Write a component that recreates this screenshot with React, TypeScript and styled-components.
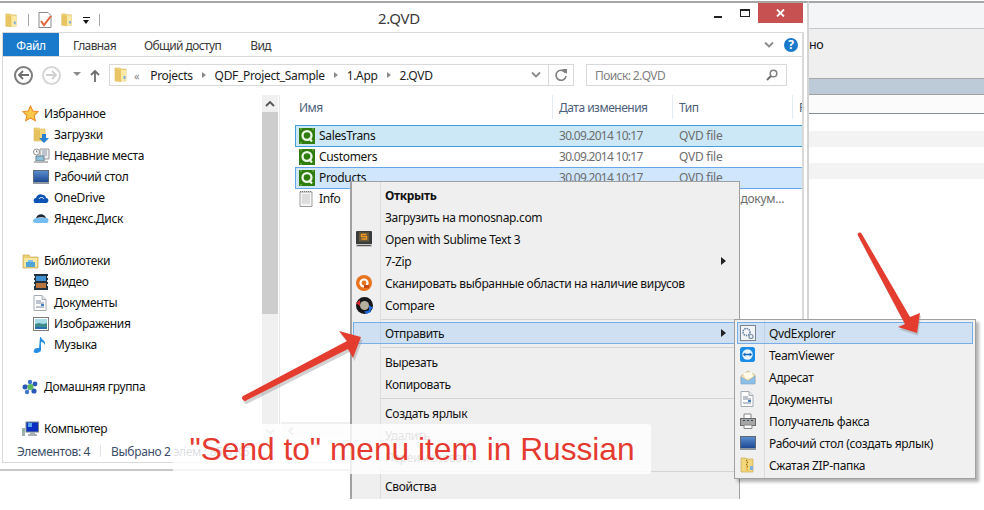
import React from "react";
import styled, { createGlobalStyle } from "styled-components";

const Global = createGlobalStyle`
  html, body { margin: 0; padding: 0; background: #fff; }
  * { box-sizing: border-box; }
  body { font-family: "Noto Sans", "Open Sans", sans-serif; font-size: 12px; }
`;

const Page = styled.div`
  position: relative; width: 984px; height: 510px; overflow: hidden; background: #fff;
  display: flex; align-items: flex-start;
  letter-spacing: -0.33px;
`;

/* ---------- icons ---------- */
const S = styled.svg`display: block; flex: none;`;
type P = { s?: number };
const Folder = ({ s = 16 }: P) => (
  <S width={s} height={s} viewBox="0 0 16 16">
    <path d="M2 1h5l1 1h5v12H2z" fill="#f2d77e" stroke="#d6b65c" strokeWidth=".6" />
    <path d="M2 2l6 1v12l-6-1z" fill="#e8c463" />
    <path d="M8 3h5v11H8z" fill="#fbeaa6" />
    <path d="M10.5 9h2v3h-2z" fill="#79aee0" />
  </S>
);
const DownFolder = () => (
  <S width={16} height={16} viewBox="0 0 16 16">
    <path d="M1 1h5l1 1h5v12H1z" fill="#f2d77e" stroke="#d6b65c" strokeWidth=".6" />
    <path d="M1 2l6 1v11l-6-1z" fill="#e6c25f" />
    <path d="M9 7h4v4h3l-5 5-5-5h3z" fill="#2a7fd0" />
  </S>
);
const Star = () => (
  <S width={17} height={17} viewBox="0 0 17 17">
    <path d="M8.5 1l2.3 5 5.4.6-4 3.7 1.1 5.4-4.8-2.7-4.8 2.7 1.1-5.4-4-3.7 5.4-.6z" fill="#fbc94a" stroke="#ec8e2c" strokeWidth="1.1" />
  </S>
);
const Recent = () => (
  <S width={17} height={16} viewBox="0 0 17 16">
    <circle cx="3.5" cy="4" r="3" fill="#fff" stroke="#8d8d8d" />
    <path d="M3.5 2.5V4H5" stroke="#666" fill="none" strokeWidth=".7" />
    <path d="M7 1h9v10H7z" fill="#eee" stroke="#9a9a9a" />
    <path d="M9 3h5M9 5h5M9 7h5" stroke="#8c9bb0" />
    <path d="M3 8h8v5H3z" fill="#8cc4e0" stroke="#6e7f8a" />
    <path d="M1 13h14v2H1z" fill="#b8b8b8" />
  </S>
);
const Desktop = () => (
  <S width={16} height={14} viewBox="0 0 16 14">
    <defs>
      <linearGradient id="dk" x1="0" y1="0" x2="0" y2="1">
        <stop offset="0" stopColor="#5c8fd0" />
        <stop offset="1" stopColor="#1b4691" />
      </linearGradient>
    </defs>
    <rect x=".5" y=".5" width="15" height="12" fill="url(#dk)" stroke="#5c6a78" />
    <path d="M0 12h16v2H0z" fill="#8f979e" />
  </S>
);
const OneDrive = () => (
  <S width={16} height={12} viewBox="0 0 16 12">
    <path d="M1 10c-1-2 0-4 2-4 1-3 4-5 7-3 2 0 3 2 3 3 2 0 3 2 2 4-1 1-2 1-2 1H3c-1 0-2 0-2-1z" fill="#0d52b5" />
    <path d="M6 7c1-2 4-2 5 0" stroke="#fff" fill="none" />
  </S>
);
const Yandex = () => (
  <S width={16} height={13} viewBox="0 0 16 13">
    <path d="M0 9c0-2 2-3 4-3h10c2 1 2 4 0 5H2C1 11 0 10 0 9z" fill="#75bdf0" />
    <path d="M3 6c1-4 8-6 10 0-3-1-6-1-10 0z" fill="#1f2a38" />
  </S>
);
const Library = () => (
  <S width={17} height={16} viewBox="0 0 17 16">
    <path d="M1 2h6l1 2h8v11H1z" fill="#f0cf73" stroke="#c9a957" strokeWidth=".7" />
    <path d="M2 5h13v9H2z" fill="#fbe8a6" />
    <path d="M4 9h9v5H4z" fill="#4fa4d6" />
    <path d="M6 7h5v2H6z" fill="#82c4e8" />
  </S>
);
const Video = () => (
  <S width={16} height={16} viewBox="0 0 16 16">
    <rect x="1" y="0" width="14" height="16" fill="#20303c" />
    <path d="M3 2h10v5H3z" fill="#3f8fd0" />
    <path d="M3 9h10v5H3z" fill="#b8763e" />
    <path d="M1 2h1v2H1zM1 6h1v2H1zM1 10h1v2H1zM14 2h1v2h-1zM14 6h1v2h-1zM14 10h1v2h-1z" fill="#e8e8e8" />
  </S>
);
const Doc = () => (
  <S width={14} height={16} viewBox="0 0 14 16">
    <path d="M1 .5h8l4 4v11H1z" fill="#fdfdfd" stroke="#a4aab2" />
    <path d="M9 .5v4h4" fill="#e2e8ee" stroke="#a4aab2" />
    <path d="M3 6h5M3 8h8M3 12h8" stroke="#7e8aa0" />
    <path d="M8 9h3v2H8z" fill="#3f7fc4" />
  </S>
);
const Pictures = () => (
  <S width={16} height={14} viewBox="0 0 16 14">
    <rect x=".5" y=".5" width="15" height="13" fill="#fff" stroke="#7c7c7c" />
    <path d="M2 2h12v5H2z" fill="#a8dcea" />
    <path d="M2 7l4-1 4 1 4-1v6H2z" fill="#3f8c8c" />
    <path d="M2 10h12v2H2z" fill="#2a6fb0" />
  </S>
);
const Music = () => (
  <S width={14} height={16} viewBox="0 0 14 16">
    <path d="M7 0h1c0 3 5 3 4 8-1-2-2-3-4-3v8c0 2-3 3-5 3-2 0-3-2-2-3 1-2 3-2 5-2z" fill="#2a8ee0" />
  </S>
);
const Home = () => (
  <S width={17} height={16} viewBox="0 0 17 16">
    <path d="M8 8L3 6M8 8l5-4M8 8l5 4M8 8l-3 5" stroke="#7d9fc8" strokeWidth="1.4" />
    <circle cx="3" cy="8" r="2.5" fill="#2c58b8" />
    <circle cx="8" cy="3" r="2.2" fill="#3e72d0" />
    <circle cx="13" cy="5" r="2.4" fill="#2c58b8" />
    <circle cx="12" cy="12" r="2.6" fill="#2c58b8" />
    <circle cx="5" cy="13" r="2.2" fill="#4078c8" />
    <circle cx="8.5" cy="8" r="3" fill="#5cb85a" />
  </S>
);
const Computer = () => (
  <S width={17} height={16} viewBox="0 0 17 16">
    <path d="M0 7h3v8H0z" fill="#9fb0b0" />
    <path d="M1 9h1v1H1z" fill="#53c04c" />
    <rect x="4" y="1" width="12.5" height="10" fill="#0a2fc0" stroke="#7a8790" />
    <path d="M6 2h4v4H6z" fill="#56a6ef" />
    <path d="M8 11h5v2h2v2H6v-2h2z" fill="#a8b0b4" />
  </S>
);
const Qvd = () => (
  <S width={16} height={16} viewBox="0 0 16 16">
    <rect width="16" height="16" fill="#2f7d0f" />
    <circle cx="8" cy="7.5" r="5.600" fill="#eef7e8" />
    <circle cx="8" cy="7.5" r="3.300" fill="#2f7d0f" />
    <path d="M10 10l3 3.500" stroke="#eef7e8" strokeWidth="2" />
    <path d="M1 1h2M13 1h2M1 15h2" stroke="#8abc66" />
  </S>
);
const NoteFile = () => (
  <S width={14} height={16} viewBox="0 0 14 16">
    <path d="M1 1h12v14.500H1z" fill="#f6f6f6" stroke="#9d9d9d" />
    <path d="M1 .5h12" stroke="#777" strokeDasharray="1 1" />
    <path d="M3 4h8M3 6h8M3 8h8M3 10h8M3 12h8" stroke="#c4c4c4" />
  </S>
);
const Sublime = () => (
  <S width={16} height={16} viewBox="0 0 16 16">
    <rect x="0" y="0" width="16" height="14" rx="1" fill="#3c3c3c" />
    <rect x="3" y="1.500" width="10" height="9" fill="#6a5a3c" />
    <path d="M10.500 3.500h-5v2.200h5v2.300h-5" stroke="#f29a1f" fill="none" strokeWidth="1.300" />
    <path d="M0 13h16v3H0z" fill="#c8c8c8" />
    <path d="M1 14.500h14" stroke="#555" />
  </S>
);
const Avast = () => (
  <S width={16} height={16} viewBox="0 0 16 16">
    <circle cx="8" cy="8" r="8" fill="#e8731e" />
    <circle cx="8" cy="8" r="4.600" fill="#fff" />
    <circle cx="8" cy="8" r="2.400" fill="#e8731e" />
    <path d="M8 10h5v3H8z" fill="#c74a10" />
  </S>
);
const Compare = () => (
  <S width={17} height={17} viewBox="0 0 17 17">
    <circle cx="8.500" cy="8.500" r="8.500" fill="#15151a" />
    <circle cx="8.500" cy="8.500" r="4.500" fill="#b4ae9e" />
    <path d="M0 6l4-3v6z" fill="#d8262c" />
    <path d="M17 11l-4 3V8z" fill="#1f6be0" />
    <path d="M8 14a6 6 0 0 0 6-2l1 3-5 2z" fill="#1f6be0" />
  </S>
);
const QvdApp = () => (
  <S width={16} height={16} viewBox="0 0 16 16">
    <rect x=".5" y=".5" width="15" height="15" fill="#f2f4f6" stroke="#7a8490" />
    <circle cx="6.500" cy="7" r="3.500" fill="none" stroke="#5f7c9c" strokeWidth="1.500" strokeDasharray="1.500 .8" />
    <circle cx="11" cy="11.500" r="2" fill="none" stroke="#7b8fa6" strokeWidth="1.200" />
  </S>
);
const TeamViewer = () => (
  <S width={16} height={16} viewBox="0 0 16 16">
    <rect width="15" height="15" rx="2.500" fill="#1a8ce6" />
    <circle cx="7.500" cy="7.500" r="5.200" fill="#e9f4fd" />
    <path d="M2.800 7.500l2.500-2v1.200h4.400V5.500l2.500 2-2.500 2V8.300H5.300v1.200z" fill="#1268c0" />
  </S>
);
const Mail = () => (
  <S width={16} height={15} viewBox="0 0 16 15">
    <path d="M1 6L8 1l7 4v8H1z" fill="#f7e3b6" stroke="#b9a27a" strokeWidth=".6" />
    <path d="M3 3l9-1 1 5-7 2z" fill="#fffbe8" />
    <path d="M1 7l7 4 7-5v8H1z" fill="#8cc0e8" stroke="#7aa2c4" strokeWidth=".6" />
  </S>
);
const Fax = () => (
  <S width={16} height={16} viewBox="0 0 16 16">
    <path d="M4 1h7v5H4z" fill="#fafafa" stroke="#888" />
    <rect x=".5" y="5.500" width="15" height="7" fill="#a6a6a6" stroke="#6b6b6b" />
    <path d="M3 7h2v1H3zM7 7h2v1H7zM11 7h2v1h-2z" fill="#304860" />
    <path d="M4 12h8v3.500H4z" fill="#fafafa" stroke="#888" />
  </S>
);
const Zip = () => (
  <S width={15} height={16} viewBox="0 0 15 16">
    <path d="M1 1h5l1 1h6v13H1z" fill="#f2d77e" stroke="#c9a957" strokeWidth=".7" />
    <path d="M6 2h2v12H6z" fill="#e8bf50" />
    <path d="M6 3h1v1H6zM7 5h1v1H7zM6 7h1v1H6zM7 9h1v1H7z" fill="#7a6a32" />
    <path d="M10 9h3v4h-3z" fill="#7fb0dc" />
  </S>
);

/* ---------- explorer window ---------- */
const Window = styled.div`
  flex: none; width: 809px; height: 470px; margin-top: 1px;
  border-top: 2px solid #a6a6a6; border-right: 2px solid #d4d4d4; border-bottom: 2px solid #c8c8c8;
  background: #fff; display: flex; flex-direction: column; padding: 0 5px 6px 2px;
`;
const TitleBar = styled.div`
  height: 29px; flex: none; display: flex; align-items: flex-start; position: relative;
`;
const Quick = styled.div`
  display: flex; align-items: center; height: 22px; margin-top: 6px; padding-left: 2px; width: 370px; flex: none;
`;
const QuickSep = styled.i<{ $r: number }>`display: block; width: 1px; height: 12px; background: #a6a6a6; margin: 0 ${p => p.$r}px 0 9px;`;
const QuickGap = styled.span`display: block; width: 7px; flex: none;`;
const DropGlyph = styled.span`
  display: block; width: 7px; height: 7px; margin: 0 0 0 9px;
  border-top: 1px solid #111; position: relative;
  &::after { content: ""; position: absolute; left: 0; top: 2px; border: 3.500px solid transparent; border-top: 4px solid #111; border-bottom: 0; }
`;
const Title = styled.div`
  font-size: 15px; color: #3a3a3a; margin: 5px 0 0 6px; letter-spacing: -0.3px; line-height: 20px;
`;
const Controls = styled.div`margin-left: auto; display: flex; align-items: flex-start; height: 20px; margin-right: -1px;`;
const Min = styled.i`display: block; width: 8px; height: 2px; background: #222; margin: 13px 18px 0 0;`;
const Max = styled.i`display: block; width: 10px; height: 8px; border: 1px solid #222; border-top-width: 2px; margin: 6px 8px 0 0;`;
const Close = styled.div`
  width: 45px; height: 20px; background: #c75050; display: flex; align-items: center; justify-content: center;
`;
const Frame = styled.div`
  flex: 1; min-height: 0; display: flex; flex-direction: column;
  border: 1px solid #d9d9d9; border-width: 1px 2px 1px 1px; width: 802px;
`;
const Tabs = styled.div`
  height: 24px; flex: none; display: flex; align-items: stretch; border-bottom: 1px solid #dadada; padding-right: 4px;
`;
const FileTab = styled.div`
  width: 56px; height: 23px; background: #1979ca; color: #fff; display: flex; align-items: center; justify-content: center; margin-right: 14px; padding-top: 1px;
`;
const Tab = styled.div<{ $r: number }>`
  color: #3b3b3b; display: flex; align-items: center; margin-right: ${p => p.$r}px; padding-top: 2px; letter-spacing: -0.6px;
`;
const RibbonRight = styled.div`margin-left: auto; display: flex; align-items: center; gap: 10px;`;
const Help = styled.div`
  width: 14px; height: 14px; border-radius: 50%; background: #1979ca; color: #fff; font-weight: 700; font-size: 12px;
  display: flex; align-items: center; justify-content: center; letter-spacing: 0;
`;
const AddressRow = styled.div`
  height: 38px; flex: none; display: flex; align-items: center; padding: 0 13px 2px 11px;
`;
const NavCircle = styled.div<{ $on?: boolean }>`
  width: 19px; height: 19px; border-radius: 50%; border: ${p => (p.$on ? "2px solid #7d7d7d" : "2px solid #d6d6d6")};
  display: flex; align-items: center; justify-content: center; margin-right: 9px; flex: none;
`;
const RecentDrop = styled.svg`margin: 0 9px 2px 3px; flex: none;`;
const UpArrow = styled.svg`flex: none;`;
const AddressBox = styled.div`
  width: 465px; height: 22px; border: 1px solid #d9d9d9; display: flex; align-items: center; padding-left: 3px; flex: none; margin-left: 9px;
`;
const Crumb = styled.span`color: #1c1c1c; white-space: nowrap;`;
const CrumbArrow = styled.i`
  display: block; margin: 0 9px; border: 3.500px solid transparent; border-left: 4px solid #8a8a8a; border-right: 0; flex: none;
`;
const Back = styled.span`color: #888; margin: 0 11px 0 5px; font-size: 11px;`;
const AddressEnd = styled.div`
  margin-left: auto; display: flex; align-items: center; height: 100%;
`;
const Refresh = styled.div`
  width: 25px; height: 100%; border-left: 1px solid #d9d9d9; margin-left: 7px; display: flex; align-items: center; justify-content: center;
`;
const SearchBox = styled.div`
  width: 201px; height: 22px; margin-left: 12px; border: 1px solid #d9d9d9; display: flex; align-items: center; justify-content: space-between;
  padding: 0 8px 0 8px; color: #7f7f7f; flex: none; letter-spacing: -0.6px;
`;
const Body = styled.div`flex: 1; min-height: 0; display: flex;`;
const Nav = styled.div`width: 259px; flex: none; padding-top: 8px; overflow: hidden;`;
const NavRow = styled.div<{ $child?: boolean; $gap?: number }>`
  height: 21px; display: flex; align-items: center; color: #101010; white-space: nowrap;
  padding-left: ${p => (p.$child ? 30 : 19)}px;
  margin-top: ${p => p.$gap ?? 0}px;
`;
const NavIcon = styled.span<{ $child?: boolean }>`
  width: ${p => (p.$child ? 21 : 22)}px; flex: none; display: flex; align-items: center;
`;
const VBar = styled.div`
  width: 16px; flex: none; background: #f0f0f0; display: flex; flex-direction: column; position: relative;
`;
const VUp = styled.div`height: 17px; display: flex; align-items: center; justify-content: center; flex: none;`;
const VThumb = styled.div`height: 202px; background: #cdcdcd; flex: none;`;
const VDown = styled.div`margin-top: auto; height: 17px; display: flex; align-items: center; justify-content: center; flex: none;`;
const ListPane = styled.div`
  flex: 1; min-width: 0; margin-left: 1px; border-left: 1px solid #e8e8e8; display: flex; flex-direction: column; overflow: hidden; position: relative;
`;
const Head = styled.div`
  height: 26px; flex: none; display: flex; align-items: center; color: #4c607a; white-space: nowrap; padding: 0 0 2px 19px; letter-spacing: -0.5px;
`;
const HeadCell = styled.div<{ $w: number }>`
  width: ${p => p.$w}px; flex: none; height: 24px; display: flex; align-items: center; padding-left: 6px;
  border-left: 1px solid #e4ecf4;
  &:first-child { border-left: 0; padding-left: 0; }
`;
const Rows = styled.div`padding: 4px 0 0 15px; width: 540px;`;
const Row = styled.div<{ $sel?: "a" | "b" }>`
  height: 22px; margin-top: -1px; display: flex; align-items: center; white-space: nowrap;
  padding: 0 0 1px 3px; color: #111;
  background: ${p => (p.$sel === "a" ? "#cce8f7" : p.$sel === "b" ? "#d0e6fc" : "transparent")};
  border: 1px solid ${p => (p.$sel === "a" ? "#3ea0d6" : p.$sel === "b" ? "#66a7e8" : "transparent")};
  border-right: 0;
  &:first-child { margin-top: 0; }
`;
const RowName = styled.span`width: 260px; flex: none; display: flex; align-items: center; gap: 4px;`;
const RowDate = styled.span`width: 120px; flex: none; color: #6d6d6d; letter-spacing: -0.72px;`;
const RowType = styled.span`color: #6d6d6d; letter-spacing: -0.25px;`;
const InfoLabel = styled.span`margin-left: 2px;`;
const HBar = styled.div`
  position: absolute; left: 1px; right: 0; bottom: 1px; height: 17px; background: #f0f0f0; display: flex; align-items: center; padding-left: 6px;
`;
const Status = styled.div`
  height: 22px; flex: none; display: flex; align-items: center; padding-left: 14px; color: #3b4d68; white-space: nowrap;
`;
const StatusSep = styled.i`display: block; width: 1px; height: 12px; background: #e4e4e4; margin: 0 10px;`;

/* ---------- background window ---------- */
const Behind = styled.div`flex: 1; height: 181px; margin-top: 1px; display: flex; flex-direction: column; border-top: 2px solid #a6a6a6;`;
const Band = styled.div<{ $h: number; $bg: string; $line?: string }>`
  height: ${p => p.$h}px; flex: none; background: ${p => p.$bg}; border-bottom: ${p => (p.$line ? `1.500px solid ${p.$line}` : "0")};
  display: flex; align-items: flex-start;
`;
const BehindText = styled.span`color: #111; margin-top: 7px; font-size: 12.500px;`;

/* ---------- menus ---------- */
const Menu = styled.div`
  position: absolute; left: 350px; top: 181px; width: 390px; height: 318px;
  border: 1px solid #a0a0a0; border-left-width: 2px; border-bottom: 0; padding-top: 2px;
  background: linear-gradient(#dcdcdc, #dcdcdc) 28px 0 / 1px 100% no-repeat, #efefef;
  color: #111;
`;
const Sub = styled.div`
  position: absolute; left: 734px; top: 319px; width: 242px; height: 160px;
  border: 1px solid #a0a0a0; padding-top: 2px;
  background: linear-gradient(#dcdcdc, #dcdcdc) 29px 0 / 1px 100% no-repeat, #f0f0f0;
  box-shadow: 3px 3px 3px rgba(0,0,0,.3);
  color: #111;
`;
const Item = styled.div<{ $on?: boolean; $off?: boolean; $sub?: boolean }>`
  height: 22px; display: flex; align-items: center; white-space: nowrap; position: relative;
  margin: 0 ${p => (p.$sub ? 2 : 3)}px 0 ${p => (p.$sub ? 2 : 1)}px;
  padding-right: 9px;
  border: 1px solid ${p => (p.$on ? "#78aee5" : "transparent")};
  background: ${p => (p.$on ? "rgba(140,195,245,.33)" : "transparent")};
  color: ${p => (p.$off ? "#666" : "inherit")};
`;
const ItemIcon = styled.span`
  width: 31px; flex: none; display: flex; justify-content: flex-start; padding-left: 2px;
`;
const Bold = styled.b`font-weight: 700;`;
const MoreArrow = styled.i`
  display: block; margin-left: auto; border: 4px solid transparent; border-left: 5px solid #222; border-right: 0;
`;
const Separator = styled.div<{ $h: number; $l: number }>`
  height: ${p => p.$h}px; display: flex; align-items: center; padding-left: ${p => p.$l}px;
  &::before { content: ""; display: block; width: 100%; height: 1px; background: #d4d4d4; }
`;

/* ---------- annotation ---------- */
const Note = styled.div`
  position: absolute; left: 173px; top: 424px; width: 478px; height: 50px; border-radius: 3px;
  background: rgba(255,255,255,.82); color: #e53a30;
  font-family: "Liberation Sans", Arial, sans-serif; font-size: 31.700px; letter-spacing: 0;
  display: flex; align-items: center; justify-content: center; white-space: nowrap;
`;
const Arrows = styled.svg`position: absolute; left: 0; top: 0; pointer-events: none;`;

const Chev = ({ d, c = "#8a8a8a" }: { d: string; c?: string }) => (
  <svg width="10" height="8" viewBox="0 0 10 8"><path d={d} fill="none" stroke={c} strokeWidth="1.800" /></svg>
);

const favs = [
  { n: "Загрузки", i: <DownFolder /> },
  { n: "Недавние места", i: <Recent /> },
  { n: "Рабочий стол", i: <Desktop /> },
  { n: "OneDrive", i: <OneDrive /> },
  { n: "Яндекс.Диск", i: <Yandex /> },
];
const libs = [
  { n: "Видео", i: <Video /> },
  { n: "Документы", i: <Doc /> },
  { n: "Изображения", i: <Pictures /> },
  { n: "Музыка", i: <Music /> },
];
const files: { n: string; sel?: "a" | "b" }[] = [
  { n: "SalesTrans", sel: "a" },
  { n: "Customers" },
  { n: "Products", sel: "b" },
];
const subs = [
  { n: "QvdExplorer", i: <QvdApp />, on: true },
  { n: "TeamViewer", i: <TeamViewer /> },
  { n: "Адресат", i: <Mail /> },
  { n: "Документы", i: <Doc /> },
  { n: "Получатель факса", i: <Fax /> },
  { n: "Рабочий стол (создать ярлык)", i: <Desktop /> },
  { n: "Сжатая ZIP-папка", i: <Zip /> },
];

const arrowA = "M243 396L347 341l-8-10 22 6-8 21-5-9L247 400a2.500 2.500 0 0 1-4-4z";
const arrowB = "M858 235.500a2 2 0 0 1 3.500-2L910 317l10-4-3 20-19-6 7-3z";

export default function App() {
  return (
    <Page>
      <Global />
      <Window>
        <TitleBar>
          <Quick>
            <Folder s={15} />
            <QuickSep $r={9} />
            <svg width="15" height="16" viewBox="0 0 15 16">
              <path d="M1 .5h9l3 3v12H1z" fill="#fff" stroke="#8a8a8a" />
              <path d="M3 9l3 4 7-9" fill="none" stroke="#e0653a" strokeWidth="2" />
            </svg>
            <QuickGap />
            <Folder s={14} />
            <DropGlyph />
            <QuickSep $r={0} />
          </Quick>
          <Title>2.QVD</Title>
          <Controls>
            <Min />
            <Max />
            <Close>
              <svg width="9" height="8" viewBox="0 0 9 8"><path d="M1 .5l7 7M8 .5l-7 7" stroke="#fff" strokeWidth="1.800" /></svg>
            </Close>
          </Controls>
        </TitleBar>
        <Frame>
          <Tabs>
            <FileTab>Файл</FileTab>
            <Tab $r={28}>Главная</Tab>
            <Tab $r={29}>Общий доступ</Tab>
            <Tab $r={0}>Вид</Tab>
            <RibbonRight>
              <Chev d="M1 1.500l4 4 4-4" />
              <Help>?</Help>
            </RibbonRight>
          </Tabs>
          <AddressRow>
            <NavCircle $on>
              <svg width="11" height="10" viewBox="0 0 11 10"><path d="M5 1L1 5l4 4M1 5h10" fill="none" stroke="#6e6e6e" strokeWidth="1.800" /></svg>
            </NavCircle>
            <NavCircle>
              <svg width="11" height="10" viewBox="0 0 11 10"><path d="M6 1l4 4-4 4M10 5H0" fill="none" stroke="#cfcfcf" strokeWidth="1.800" /></svg>
            </NavCircle>
            <RecentDrop width="8" height="5" viewBox="0 0 8 5"><path d="M0 0h8L4 4z" fill="#8a8a8a" /></RecentDrop>
            <UpArrow width="10" height="13" viewBox="0 0 10 13"><path d="M5 13V2M1 6l4-4 4 4" fill="none" stroke="#6e6e6e" strokeWidth="1.800" /></UpArrow>
            <AddressBox>
              <Folder s={16} />
              <Back>«</Back>
              <Crumb>Projects</Crumb>
              <CrumbArrow />
              <Crumb>QDF_Project_Sample</Crumb>
              <CrumbArrow />
              <Crumb>1.App</Crumb>
              <CrumbArrow />
              <Crumb>2.QVD</Crumb>
              <AddressEnd>
                <Chev d="M1 1.500l4 4 4-4" />
                <Refresh>
                  <svg width="13" height="13" viewBox="0 0 13 13"><path d="M10.500 4a5 5 0 1 0 .5 3" fill="none" stroke="#7f7f7f" strokeWidth="1.600" /><path d="M7 0l5 0 0 5z" fill="#7f7f7f" /></svg>
                </Refresh>
              </AddressEnd>
            </AddressBox>
            <SearchBox>
              Поиск: 2.QVD
              <svg width="12" height="12" viewBox="0 0 12 12"><circle cx="7.500" cy="4.500" r="3.300" fill="none" stroke="#7f7f7f" strokeWidth="1.500" /><path d="M5 7l-4 4" stroke="#6e6e6e" strokeWidth="2" /></svg>
            </SearchBox>
          </AddressRow>
          <Body>
            <Nav>
              <NavRow><NavIcon><Star /></NavIcon>Избранное</NavRow>
              {favs.map(f => (
                <NavRow key={f.n} $child><NavIcon $child>{f.i}</NavIcon>{f.n}</NavRow>
              ))}
              <NavRow $gap={21}><NavIcon><Library /></NavIcon>Библиотеки</NavRow>
              {libs.map(f => (
                <NavRow key={f.n} $child><NavIcon $child>{f.i}</NavIcon>{f.n}</NavRow>
              ))}
              <NavRow $gap={21}><NavIcon><Home /></NavIcon>Домашняя группа</NavRow>
              <NavRow $gap={21}><NavIcon><Computer /></NavIcon>Компьютер</NavRow>
            </Nav>
            <VBar>
              <VUp><Chev d="M1 6l4-4 4 4" c="#555" /></VUp>
              <VThumb />
              <VDown><Chev d="M1 1.500l4 4 4-4" c="#aaa" /></VDown>
            </VBar>
            <ListPane>
              <Head>
                <HeadCell $w={253}>Имя</HeadCell>
                <HeadCell $w={120}>Дата изменения</HeadCell>
                <HeadCell $w={120}>Тип</HeadCell>
                <HeadCell $w={60}>Размер</HeadCell>
              </Head>
              <Rows>
                {files.map(f => (
                  <Row key={f.n} $sel={f.sel}>
                    <RowName><Qvd />{f.n}</RowName>
                    <RowDate>30.09.2014 10:17</RowDate>
                    <RowType>QVD file</RowType>
                  </Row>
                ))}
                <Row>
                  <RowName><NoteFile /><InfoLabel>Info</InfoLabel></RowName>
                  <RowDate>30.09.2014 10:17</RowDate>
                  <RowType>Текстовый докум...</RowType>
                </Row>
              </Rows>
              <HBar><Chev d="M6 .5L2 4l4 3.500" c="#aaa" /></HBar>
            </ListPane>
          </Body>
          <Status>
            Элементов: 4
            <StatusSep />
            Выбрано 2 элем.: 85,5 КБ
          </Status>
        </Frame>
      </Window>

      <Behind>
        <Band $h={26} $bg="#f4f5f7" $line="#c8c8c8" />
        <Band $h={50} $bg="#efefef" $line="#a8a8a8"><BehindText>но</BehindText></Band>
        <Band $h={16} $bg="#bdcad7" $line="#a0a0a0" />
        <Band $h={19} $bg="#fbfbfb" $line="#858b99" />
        <Band $h={17} $bg="#fff" />
        <Band $h={16} $bg="#f3f3f3" />
        <Band $h={16} $bg="#fff" />
        <Band $h={16} $bg="#f3f3f3" />
      </Behind>

      <Menu>
        <Item><ItemIcon /><Bold>Открыть</Bold></Item>
        <Item><ItemIcon />Загрузить на monosnap.com</Item>
        <Item><ItemIcon><Sublime /></ItemIcon>Open with Sublime Text 3</Item>
        <Item><ItemIcon />7-Zip<MoreArrow /></Item>
        <Item><ItemIcon><Avast /></ItemIcon>Сканировать выбранные области на наличие вирусов</Item>
        <Item><ItemIcon><Compare /></ItemIcon>Compare</Item>
        <Separator $h={6} $l={28} />
        <Item $on><ItemIcon />Отправить<MoreArrow /></Item>
        <Separator $h={7} $l={28} />
        <Item><ItemIcon />Вырезать</Item>
        <Item><ItemIcon />Копировать</Item>
        <Separator $h={7} $l={28} />
        <Item><ItemIcon />Создать ярлык</Item>
        <Item $off><ItemIcon />Удалить</Item>
        <Item $off><ItemIcon />Переименовать</Item>
        <Separator $h={7} $l={28} />
        <Item><ItemIcon />Свойства</Item>
      </Menu>

      <Sub>
        {subs.map(s => (
          <Item key={s.n} $sub $on={s.on}><ItemIcon>{s.i}</ItemIcon>{s.n}</Item>
        ))}
      </Sub>

      <Note>"Send to" menu item in Russian</Note>

      <Arrows width="984" height="510" viewBox="0 0 984 510">
        <path d={arrowA} fill="#8f8f8f" opacity=".4" transform="translate(1.500 3)" />
        <path d={arrowB} fill="#8f8f8f" opacity=".4" transform="translate(1 2.500)" />
        <path d={arrowA} fill="#e53c30" />
        <path d={arrowB} fill="#e53c30" />
      </Arrows>
    </Page>
  );
}
